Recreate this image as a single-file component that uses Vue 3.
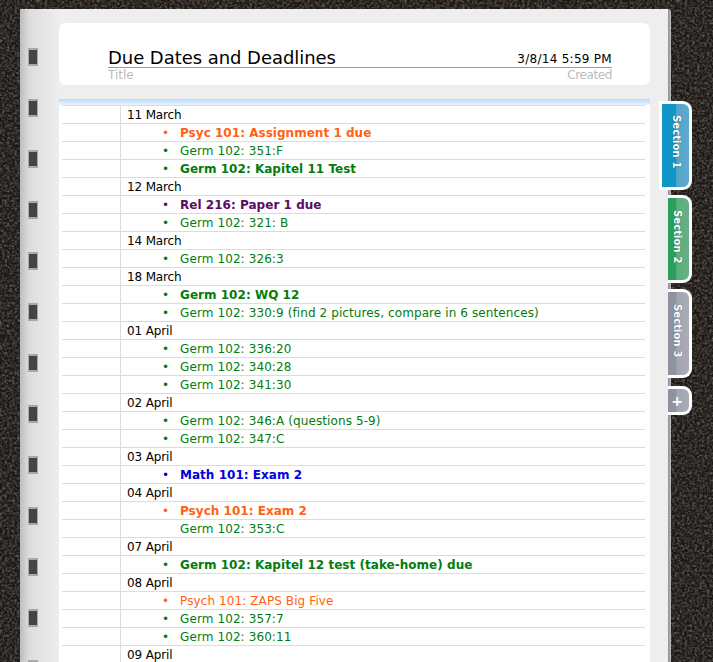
<script setup>
const holes = Array.from({ length: 13 }, (_, i) => i)

const rows = [
  { text: '11 March' },
  { text: 'Psyc 101: Assignment 1 due', color: 'orange', bold: true, bullet: true },
  { text: 'Germ 102: 351:F', color: 'green', bullet: true },
  { text: 'Germ 102: Kapitel 11 Test', color: 'green', bold: true, bullet: true },
  { text: '12 March' },
  { text: 'Rel 216: Paper 1 due', color: 'purple', bold: true, bullet: true },
  { text: 'Germ 102: 321: B', color: 'green', bullet: true },
  { text: '14 March' },
  { text: 'Germ 102: 326:3', color: 'green', bullet: true },
  { text: '18 March' },
  { text: 'Germ 102: WQ 12', color: 'green', bold: true, bullet: true },
  { text: 'Germ 102: 330:9 (find 2 pictures, compare in 6 sentences)', color: 'green', bullet: true },
  { text: '01 April' },
  { text: 'Germ 102: 336:20', color: 'green', bullet: true },
  { text: 'Germ 102: 340:28', color: 'green', bullet: true },
  { text: 'Germ 102: 341:30', color: 'green', bullet: true },
  { text: '02 April' },
  { text: 'Germ 102: 346:A (questions 5-9)', color: 'green', bullet: true },
  { text: 'Germ 102: 347:C', color: 'green', bullet: true },
  { text: '03 April' },
  { text: 'Math 101: Exam 2', color: 'blue', bold: true, bullet: true },
  { text: '04 April' },
  { text: 'Psych 101: Exam 2', color: 'orange', bold: true, bullet: true },
  { text: 'Germ 102: 353:C', color: 'green' },
  { text: '07 April' },
  { text: 'Germ 102: Kapitel 12 test (take-home) due', color: 'green', bold: true, bullet: true },
  { text: '08 April' },
  { text: 'Psych 101: ZAPS Big Five', color: 'orange', bullet: true },
  { text: 'Germ 102: 357:7', color: 'green', bullet: true },
  { text: 'Germ 102: 360:11', color: 'green', bullet: true },
  { text: '09 April' }
]
</script>

<template>
  <div class="desk">
    <svg class="leather" width="713" height="662" aria-hidden="true">
      <filter id="grain">
        <feTurbulence type="fractalNoise" baseFrequency="0.4" numOctaves="3" seed="4" />
        <feColorMatrix values="0 0 0 0 0.17  0 0 0 0 0.15  0 0 0 0 0.13  1.2 1.2 0 0 -1" />
      </filter>
      <rect width="713" height="662" filter="url(#grain)" />
    </svg>

    <div class="book">
      <div class="spine">
        <div v-for="h in holes" :key="h" class="hole"></div>
      </div>

      <div class="paper">
        <div class="head-card">
          <div class="head-row">
            <div class="title-col">
              <div class="title">Due Dates and Deadlines</div>
              <div class="label">Title</div>
            </div>
            <div class="created-col">
              <div class="created">3/8/14 5:59 PM</div>
              <div class="label right">Created</div>
            </div>
          </div>
        </div>

        <div class="sheet">
          <div class="glow"></div>
          <div v-for="(row, i) in rows" :key="i" class="row">
            <div class="margin"></div>
            <div class="cell" :class="[row.color, { bold: row.bold, item: row.color }]">
              <span v-if="row.bullet" class="dot">•</span>{{ row.text }}
            </div>
          </div>
        </div>
      </div>

      <div class="edge"></div>

      <div class="tabs">
        <div class="tab blue-tab active"><span>Section 1</span></div>
        <div class="tab green-tab"><span>Section 2</span></div>
        <div class="tab grey-tab"><span>Section 3</span></div>
        <div class="tab add-tab">+</div>
      </div>
    </div>
  </div>
</template>

<style>
html, body { margin: 0; background: #1c1815; }
</style>

<style scoped>
.desk {
  position: relative;
  width: 713px;
  height: 662px;
  overflow: hidden;
  background: #1c1815;
  font-family: "DejaVu Sans", Verdana, sans-serif;
}

.leather {
  position: absolute;
  left: 0;
  top: 0;
}

.book {
  position: relative;
  display: flex;
  margin: 9px 0 0 20px;
  height: 653px;
}

.spine {
  width: 39px;
  flex: none;
  box-sizing: border-box;
  padding-top: 39px;
  display: flex;
  flex-direction: column;
  align-items: flex-start;
  gap: 33px;
  background: linear-gradient(90deg, #bdbdbd 0, #dcdcdc 9px, #e2e2e2 18px, #e9e9ea 32px, #eeeeee 39px);
}

.hole {
  flex: none;
  width: 8px;
  height: 14px;
  margin-left: 8px;
  background: #444;
  border: 2px solid #a9a9a9;
  border-width: 2px 1px;
}

.paper {
  width: 609px;
  flex: none;
  background: #eee;
  padding-top: 14px;
  box-sizing: border-box;
}

.head-card {
  width: 591px;
  height: 62px;
  box-sizing: border-box;
  padding: 24px 38px 0 49px;
  background: #fff;
  border-radius: 7px;
}

.head-row {
  display: flex;
  justify-content: space-between;
}

.title-col {
  flex: 1;
}

.title {
  font-size: 18px;
  line-height: 22px;
  letter-spacing: -0.05px;
  color: #000;
  border-bottom: 1px solid #999;
  height: 20px;
}

.created-col {
  width: 110px;
  text-align: right;
}

.created {
  font-size: 12px;
  line-height: 24px;
  height: 20px;
  letter-spacing: 0.28px;
  color: #000;
  border-bottom: 1px solid #999;
}

.label {
  margin-top: 1px;
  font-size: 12px;
  line-height: 13px;
  color: #bbb;
}

.label.right {
  letter-spacing: -0.4px;
}

.sheet {
  width: 591px;
  height: 600px;
  margin-top: 14px;
  background: #fff;
  box-sizing: border-box;
  padding: 6px 5px 0 3px;
  position: relative;
}

.glow {
  position: absolute;
  left: 0;
  right: 0;
  top: 0;
  height: 6px;
  background: linear-gradient(180deg, #b6daf9, #eaf4fd);
}

.row {
  display: flex;
  height: 18px;
  box-sizing: border-box;
  border-top: 1px solid #dcdcdc;
}

.margin {
  width: 58px;
  flex: none;
  border-right: 1px solid #dcdcdc;
}

.cell {
  flex: 1;
  padding-left: 6px;
  font-size: 12px;
  line-height: 19px;
  letter-spacing: -0.15px;
  color: #000;
  white-space: nowrap;
  position: relative;
}

.cell.item {
  padding-left: 59px;
  letter-spacing: 0.1px;
}

.cell.item.bold {
  letter-spacing: 0.03px;
}

.dot {
  position: absolute;
  left: 41px;
  top: 0;
  font-weight: normal;
}

.bold { font-weight: bold; }
.orange { color: #ff6212; }
.green { color: #047c0c; }
.purple { color: #5b0b63; }
.blue { color: #0000e0; }

.edge {
  width: 3px;
  flex: none;
  background: linear-gradient(90deg, #8d8d8d, #bdbdbd);
  border-top-right-radius: 3px;
}

.tabs {
  position: absolute;
  left: 639px;
  top: 92px;
  width: 33px;
  display: flex;
  flex-direction: column;
  align-items: flex-end;
  gap: 5px;
}

.tab {
  box-sizing: border-box;
  width: 24px;
  height: 88px;
  padding-right: 3px;
  border: 3px solid #fff;
  border-left: 0;
  border-radius: 0 9px 9px 0;
  display: flex;
  justify-content: center;
  color: #fff;
  font-size: 10px;
  font-weight: bold;
}

.tab span {
  writing-mode: vertical-rl;
  margin-top: 12px;
  line-height: 16px;
  height: 60px;
  letter-spacing: 0.1px;
  white-space: nowrap;
  text-shadow: 0 0 1px rgba(0, 0, 0, 0.5);
}

.tab.active {
  width: 33px;
  height: 89px;
  padding: 0;
  border-left: 3px solid #fff;
  border-radius: 0 9px 9px 0;
}

.tab.active span {
  margin-top: 11px;
}

.blue-tab { background: linear-gradient(90deg, #0f95c6 0, #0f95c6 50%, #51a5ca 54%, #5ea9cf 100%); }
.green-tab { background: linear-gradient(90deg, #2a9e5a 0, #2a9e5a 36%, #5aae7c 42%, #66b086 100%); }
.grey-tab {
  height: 89px;
  margin-top: 1px;
  background: linear-gradient(90deg, #8f93a0 0, #8f93a0 36%, #a2a5b0 42%, #aaacb6 100%);
}

.add-tab {
  height: 29px;
  margin-top: 3px;
  background: linear-gradient(90deg, #8f93a0 0, #8f93a0 36%, #a2a5b0 42%, #aaacb6 100%);
  align-items: center;
  font-size: 14px;
  line-height: 1;
}
</style>
